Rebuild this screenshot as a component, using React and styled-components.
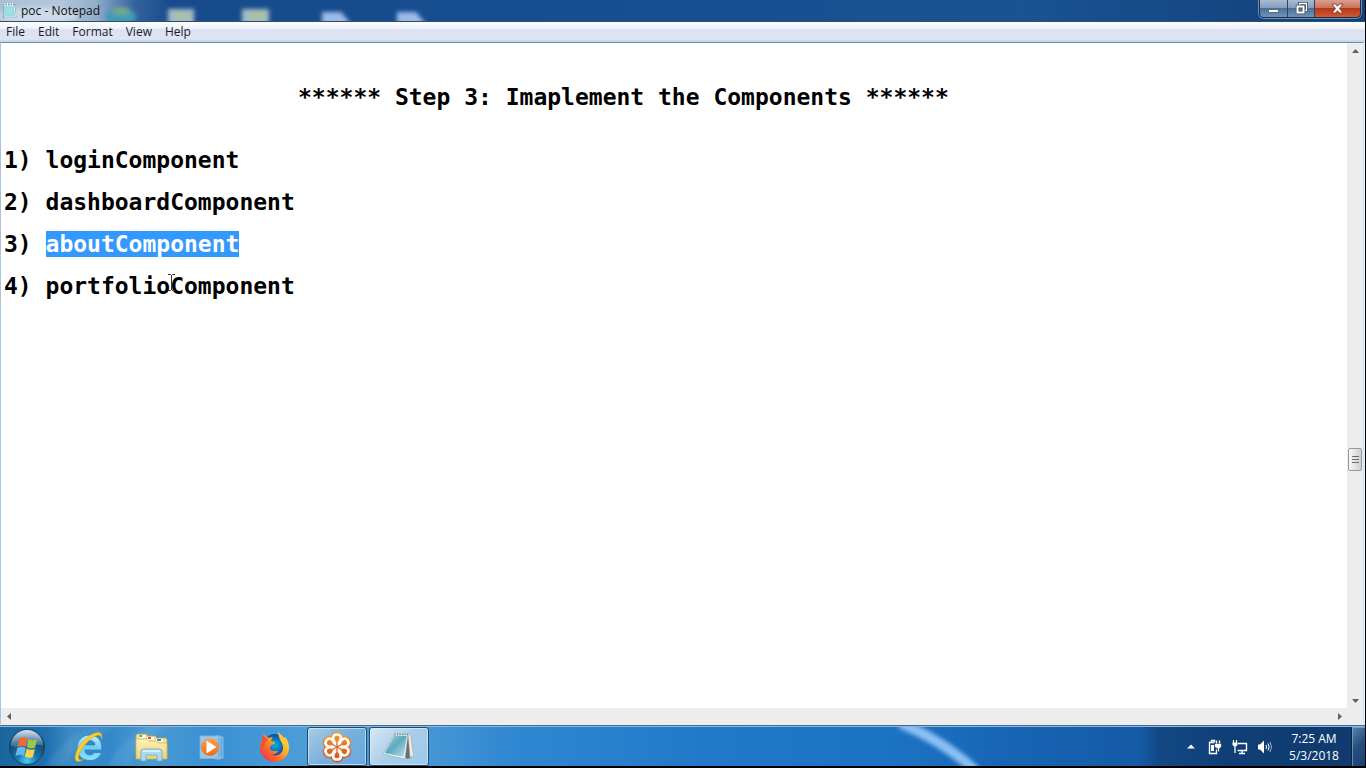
import React, { useLayoutEffect, useRef } from "react";
import styled, { createGlobalStyle } from "styled-components";

const GlobalStyle = createGlobalStyle`
  * { box-sizing: border-box; }
  body { margin: 0; background: #000; overflow: hidden; }
  button { font: inherit; border: 0; padding: 0; background: none; color: inherit; }
`;

const Desktop = styled.div`
  height: 100vh;
  display: flex;
  flex-direction: column;
  padding: 0 1px 2px 0;
  font-family: "Open Sans", "Noto Sans", sans-serif;
  font-size: 12px;
  background: #000;
`;

const Window = styled.main`
  flex: 1;
  min-height: 0;
  display: flex;
  flex-direction: column;
  background: #e8f1fa;
  border-bottom: 1px solid #46698c;
`;

const TitleBar = styled.header`
  position: relative;
  flex: none;
  height: 22px;
  display: flex;
  align-items: flex-start;
  overflow: hidden;
  background: linear-gradient(90deg, #a9bfd6 0, #b4c6da 60px, #92aecb 95px, #33639c 135px, #174b8b 170px, #164d90 460px, #1a5294 75%, #123f77 100%);
  border-bottom: 1px solid #2c4d74;
`;

const GlassBackdrop = styled.svg`
  position: absolute;
  inset: 0;
  width: 100%;
  height: 100%;
`;

const Caption = styled.h1`
  position: relative;
  flex: 1;
  display: flex;
  align-items: center;
  gap: 4px;
  height: 21px;
  margin: 0;
  padding-left: 2px;
  font-size: 12px;
  line-height: 20px;
  font-weight: 400;
  color: #111;
`;

const CaptionButtons = styled.div`
  position: relative;
  display: flex;
  height: 18px;
  margin-right: 4px;
  border: 1px solid #1c2f4a;
  border-top: 0;
  border-radius: 0 0 5px 5px;
  overflow: hidden;
  box-shadow: 0 0 0 1px rgba(200, 220, 240, 0.5);
`;

const CaptionButton = styled.button`
  width: ${(p) => (p.$close ? 46 : 27)}px;
  display: flex;
  align-items: center;
  justify-content: center;
  background: ${(p) =>
    p.$close
      ? "linear-gradient(#d9a08f 0, #cc7459 45%, #b8371a 50%, #cf5a35 100%)"
      : "linear-gradient(#a9bcd2 0, #839fbe 45%, #4b7199 50%, #6f95ba 100%)"};
  & + & { border-left: 1px solid #2b4463; }
`;

const MenuBar = styled.nav`
  flex: none;
  display: flex;
  height: 20px;
  background: linear-gradient(#fdfdff 0, #f1f4fb 30%, #dbe2f3 40%, #dde4f5 85%, #c8cfdd 100%);
`;

const MenuItem = styled.button`
  height: 19px;
  padding: 0 6px;
  line-height: 18px;
  color: #1c1c1c;
  & + & { margin-left: 1px; }
`;

const Client = styled.section`
  flex: 1;
  min-height: 0;
  display: grid;
  grid-template: minmax(0, 1fr) 16px / minmax(0, 1fr) 16px;
  margin: 0 1px 1px 0;
  border: 1px solid #6f9cc8;
  border-width: 1px 1px 0;
  border-color: #5f93c6 #c9e4f5 #c9e4f5 #a9c2de;
`;

const Editor = styled.textarea`
  display: block;
  width: 100%;
  height: 100%;
  margin: 0;
  padding: 2px 3px;
  border: 0;
  outline: 0;
  resize: none;
  overflow: hidden;
  white-space: pre;
  tab-size: 98px;
  background: #fff;
  color: #000;
  font: bold 23px/21px "DejaVu Sans Mono", monospace;
  &::selection { background: #3399ff; color: #fff; }
`;

const ScrollTrack = styled.div`
  display: flex;
  flex-direction: ${(p) => (p.$vertical ? "column" : "row")};
  align-items: center;
  justify-content: space-between;
  background: #ededed;
`;

const ScrollButton = styled.button`
  width: 16px;
  height: 16px;
  display: grid;
  place-items: center;
`;

const Spring = styled.div`
  flex: ${(p) => p.$grow};
`;

const Thumb = styled.div`
  width: 14px;
  height: 23px;
  display: grid;
  place-items: center;
  border: 1px solid #979797;
  border-radius: 2px;
  background: linear-gradient(90deg, #f8f8f8, #e3e3e3 50%, #cfcfcf);
`;

const Corner = styled.div`
  background: #ededed;
`;

const Taskbar = styled.footer`
  position: relative;
  flex: none;
  height: 40px;
  display: flex;
  color: #fff;
  overflow: hidden;
  background: linear-gradient(90deg, #1a659e 0, #1d6fae 45px, #3a8ac4 70px, #3388c8 110px, #4a9bd3 150px, #3a90d2 210px, #4b9dd8 300px, #4596d5 430px, #2f86d0 520px, #2279c9 700px, #1c72c2 900px, #1766b5 1000px, #155aa5 1140px, #124884 1160px, #0f3e76 1230px, #0f3a6e 1366px);
  border-top: 1px solid #8cb8dc;
`;

const Launchers = styled.div`
  position: relative;
  display: flex;
  gap: 2px;
  flex: 1;
`;

const StartButton = styled.button`
  position: relative;
  width: 57px;
  display: grid;
  place-items: center;
  padding-right: 3px;
`;

const TaskButton = styled.button`
  width: 60px;
  display: grid;
  place-items: center;
  border: 1px solid ${(p) => (p.$open ? "#23496d" : "transparent")};
  border-radius: 3px;
  box-shadow: ${(p) => (p.$open ? "inset 0 0 0 1px rgba(220,240,255,.65)" : "none")};
  background: ${(p) =>
    p.$active
      ? "linear-gradient(135deg, #d7e8f5 0, #a9cde9 50%, #9dc8ea 100%)"
      : p.$open
      ? "linear-gradient(135deg, #a9cce6 0, #78b0dc 50%, #67a9df 100%)"
      : "none"};
`;

const Tray = styled.div`
  position: relative;
  display: flex;
  align-items: center;
`;

const TrayButton = styled.button`
  width: ${(p) => p.$width || 24}px;
  height: 24px;
  display: grid;
  place-items: center;
`;

const Clock = styled.time`
  width: 74px;
  text-align: center;
  font-size: 12px;
  line-height: 17px;
`;

const ShowDesktop = styled.button`
  width: 14px;
  height: 39px;
  border-left: 1px solid #0a2344;
  background: linear-gradient(135deg, #5f83a8 0, #254e80 50%, #1c4170 100%);
  box-shadow: inset 1px 1px 0 rgba(160, 195, 225, 0.5);
`;

const Pointer = styled.svg`
  position: fixed;
  left: 167px;
  top: 274px;
  pointer-events: none;
`;

function Backdrop() {
  return (
    <GlassBackdrop aria-hidden="true">
      <defs>
        <filter id="soft" x="-30%" y="-50%" width="160%" height="200%">
          <feGaussianBlur stdDeviation="2" />
        </filter>
      </defs>
      <g filter="url(#soft)">
        <ellipse cx="38" cy="16" rx="40" ry="9" fill="#dae3ec" opacity=".7" />
        <ellipse cx="121" cy="17" rx="15" ry="9" fill="#3c9cb5" />
        <ellipse cx="121" cy="11" rx="9" ry="4" fill="#74a88a" />
        <path d="M168 9h26v16h-26z" fill="#a2bbc4" />
        <path d="M242 9h27v16h-27z" fill="#a3bcc0" />
        <path d="M176 13h12v6h-12zM251 12h13v7h-13z" fill="#aebf9d" />
        <path d="M322 12h19l10 12h-29zM397 12h19l10 12h-29z" fill="#9dbbe6" />
      </g>
    </GlassBackdrop>
  );
}

function NotepadSmall() {
  return (
    <svg width="15" height="17" viewBox="0 0 15 17" aria-hidden="true">
      <path d="M2 2.5h10.5l1.5 13H1z" fill="#7ec4d2" stroke="#678d9d" strokeWidth=".7" />
      <path d="M2 3h9l1.2 11H1.5z" fill="#9edce5" />
      <path d="M3 1v3M5.500 1v3M8 1v3M10.500 1v3" stroke="#f3f8fa" />
      <path d="M12 3.500l1.500 11.500H2" fill="none" stroke="#eef8fa" />
    </svg>
  );
}

function StartOrb() {
  return (
    <svg width="38" height="38" viewBox="0 0 38 38" aria-hidden="true">
      <defs>
        <radialGradient id="orb" cx=".5" cy=".9" r=".85">
          <stop offset="0" stopColor="#45d3f2" />
          <stop offset=".35" stopColor="#1674ab" />
          <stop offset=".75" stopColor="#164773" />
          <stop offset="1" stopColor="#527c9d" />
        </radialGradient>
        <linearGradient id="orbShine" x2="0" y2="1">
          <stop offset="0" stopColor="#e8f4fa" stopOpacity=".85" />
          <stop offset="1" stopColor="#a0c8dc" stopOpacity=".25" />
        </linearGradient>
      </defs>
      <circle cx="19" cy="19" r="17.5" fill="url(#orb)" stroke="#174264" />
      <path d="M3 18a16 16 0 0 1 32 0c-9-4-20 3-32 0z" fill="url(#orbShine)" />
      <path d="M11.500 10.500q4.500-2.500 8 0l-1.500 8.500q-4-2.300-8.500 0z" fill="#ee6a32" />
      <path d="M20.500 11q4 2.500 8.500.3l-2 8.500q-4.300 1.800-8-.5z" fill="#9ac84c" />
      <path d="M9.200 20q4.500-2.300 8.500 0l-1.700 8q-4-2.500-8.500 0z" fill="#64b8ee" />
      <path d="M18.700 20.500q4 2.300 8.200.4l-2.100 8q-4 2-7.900-.5z" fill="#ffd04b" />
    </svg>
  );
}

function ExplorerE() {
  return (
    <svg width="34" height="34" viewBox="0 0 34 34" aria-hidden="true">
      <defs>
        <linearGradient id="ie" x2="0" y2="1">
          <stop offset="0" stopColor="#c5f1ff" />
          <stop offset=".5" stopColor="#70cdf5" />
          <stop offset="1" stopColor="#8be0fc" />
        </linearGradient>
      </defs>
      <path fillRule="evenodd" d="M18 5C10.500 5 5 10.500 5 18c0 7.500 5.500 12.500 13 12.500 5.500 0 9.700-2.800 11.500-8h-7.300c-.8 1.600-2.200 2.500-4.300 2.500-3 0-5-2-5.100-5h17.100C30.500 11 25.500 5 18 5zm-5.100 10c.4-2.700 2.300-4.400 5.100-4.400s4.700 1.700 5 4.400z" fill="url(#ie)" stroke="#2b84bd" strokeWidth=".8" />
      <path d="M29.500 9.500C31 5 29.300 2 25.500 2.400 19 3 9 11 5 20c-3 7-2.400 11.500 1.200 11.500 1.800 0 3.800-1 5.800-2.500-5 2.300-7-.2-4.300-6C11.300 15 20 6.300 26 5.200c2.500-.4 3.600 1.300 3.500 4.300z" fill="#f6cf33" stroke="#d09a1b" strokeWidth=".5" />
    </svg>
  );
}

function Folder() {
  return (
    <svg width="34" height="34" viewBox="0 0 34 34" aria-hidden="true">
      <defs>
        <linearGradient id="folder" x2="0" y2="1">
          <stop offset="0" stopColor="#fff3b8" />
          <stop offset="1" stopColor="#ecd071" />
        </linearGradient>
      </defs>
      <path d="M2 6q0-2 2-2h8l2 2h7l2 2h8q2 0 2 2v18H2z" fill="#f3df91" stroke="#c4a552" strokeWidth=".7" />
      <path d="M5 5h6v3H5zM13 7h7v3h-7zM22 9h7v3h-7z" fill="#fff" />
      <path d="M5.500 5h2.500v2H5.500z" fill="#3fa457" />
      <path d="M14 7h3v2h-3z" fill="#dc4836" />
      <path d="M23 9h4v2h-4z" fill="#4388ca" />
      <path d="M2 9h11l2 2h7l2 2h9v16H2z" fill="url(#folder)" stroke="#cfb057" strokeWidth=".7" />
      <path d="M7 31V22q0-3 3-3h15q3 0 3 3v9h-5v-6H12v6z" fill="#a8daf2" stroke="#6caacd" strokeWidth=".8" />
      <path d="M8.500 21h18" stroke="#e2f6ff" strokeWidth="1.500" />
    </svg>
  );
}

function MediaPlayer() {
  return (
    <svg width="34" height="34" viewBox="0 0 34 34" aria-hidden="true">
      <defs>
        <linearGradient id="play" x2="0" y2="1">
          <stop offset="0" stopColor="#f9a052" />
          <stop offset="1" stopColor="#ed6b18" />
        </linearGradient>
      </defs>
      <path d="M22 7h5v21h-5zM19 6h5v23h-5z" fill="#62a9dc" stroke="#a3d0ee" strokeWidth=".7" />
      <path d="M4 6h18v22.500H4z" fill="#98c7e9" stroke="#80b8df" strokeWidth=".8" />
      <circle cx="14" cy="17" r="9" fill="url(#play)" />
      <path d="M10.500 10.500v13l10-6.500z" fill="#fff" />
    </svg>
  );
}

function Firefox() {
  return (
    <svg width="34" height="34" viewBox="0 0 34 34" aria-hidden="true">
      <defs>
        <linearGradient id="fox" x1="1" x2="0" y2="1">
          <stop offset="0" stopColor="#fff04d" />
          <stop offset=".4" stopColor="#ffae25" />
          <stop offset=".7" stopColor="#f85b32" />
          <stop offset="1" stopColor="#e52469" />
        </linearGradient>
        <radialGradient id="globe">
          <stop offset="0" stopColor="#00b3e6" />
          <stop offset="1" stopColor="#1745a1" />
        </radialGradient>
      </defs>
      <circle cx="17" cy="15" r="11" fill="url(#globe)" />
      <path d="M20 1c1 3 4 4 6 7l1-1c3 3 4 7 4 11a14.500 14 0 0 1-29 0c0-4 1-7 3-9V4l5 4c2-1 4-1 5 0-1 0-2 2-2 3l4 1c0 2-1 2-4 3 0 2-2 2-1 4 2 3 5 1.500 8 2-1 3-5 4-7 3 4 3 11 1 12-5 1-6-5-9-5-18z" fill="url(#fox)" />
      <path d="M5 5l5 5-3 2-1 6-3-3z" fill="#fa4a33" />
    </svg>
  );
}

function Meeting() {
  const petals = [0, 60, 120, 180, 240, 300];
  return (
    <svg width="34" height="34" viewBox="0 0 34 34" aria-hidden="true">
      <defs>
        <linearGradient id="flower" gradientUnits="userSpaceOnUse" x1="17" y1="1" x2="17" y2="33">
          <stop offset="0" stopColor="#eda02e" />
          <stop offset="1" stopColor="#cc4c25" />
        </linearGradient>
      </defs>
      <g fill="url(#flower)">
        <circle cx="17" cy="17" r="13" />
        {petals.map((a) => {
          const t = (a * Math.PI) / 180;
          return <circle key={a} cx={17 + 9 * Math.sin(t)} cy={17 - 9 * Math.cos(t)} r="6.500" />;
        })}
      </g>
      <g fill="none" stroke="#fffaf3" strokeWidth="2.600">
        {petals.map((a) => (
          <path key={a} d="M15.800 13.500C11.500 9 12.500 4.500 17 4.500s5.500 4.500 1.200 9" transform={`rotate(${a} 17 17)`} />
        ))}
      </g>
      <circle cx="17" cy="17" r="4" fill="#fffaf3" />
      <g stroke="#dd6a2a" strokeWidth="1.300">
        <path d="M17 12.500v9M13 14.800l8 4.400M13 19.200l8-4.400" />
      </g>
    </svg>
  );
}

function NotepadLarge() {
  return (
    <svg width="34" height="34" viewBox="0 0 34 34" aria-hidden="true">
      <defs>
        <linearGradient id="pad" x2="1" y2="1">
          <stop offset="0" stopColor="#b5dfe9" />
          <stop offset=".45" stopColor="#5fa9bf" />
          <stop offset="1" stopColor="#b9e2e8" />
        </linearGradient>
      </defs>
      <path d="M26 4.500l3.500 23-4 1.500-3-2z" fill="#6f6d68" />
      <path d="M26 4h2.500l3 22-3.500 1.500z" fill="#eceae4" stroke="#8d9899" strokeWidth=".4" />
      <path d="M12.500 4L26 4.500 23 29 1 24z" fill="#f2f6f6" stroke="#7b9ca5" strokeWidth=".5" />
      <path d="M12.500 5.500l12.300.5L21.500 27 2.500 23z" fill="url(#pad)" />
      <path d="M13 3.500v2M15.500 3.500v2M18 3.500v2M20.500 3.500v2M23 3.500v2M25.500 3.500v2" stroke="#71848b" strokeWidth=".9" />
    </svg>
  );
}

function Arrow({ points }) {
  return (
    <svg width="7" height="7" viewBox="0 0 7 7" aria-hidden="true">
      <path d={points} fill="#606060" />
    </svg>
  );
}

const launchers = [
  { name: "Internet Explorer", icon: ExplorerE },
  { name: "Windows Explorer", icon: Folder },
  { name: "Windows Media Player", icon: MediaPlayer },
  { name: "Firefox", icon: Firefox },
  { name: "GoToMeeting", icon: Meeting, open: true },
  { name: "Notepad", icon: NotepadLarge, open: true, active: true },
];

const selected = "aboutComponent";
const content = [
  "",
  "",
  "\t\t\t****** Step 3: Imaplement the Components ******",
  "",
  "",
  "1) loginComponent",
  "",
  "2) dashboardComponent",
  "",
  "3) aboutComponent",
  "",
  "4) portfolioComponent",
].join("\n");

export default function App() {
  const editor = useRef(null);

  useLayoutEffect(() => {
    const start = content.indexOf(selected);
    editor.current.focus({ preventScroll: true });
    editor.current.setSelectionRange(start, start + selected.length);
  }, []);

  return (
    <Desktop>
      <GlobalStyle />
      <Window>
        <TitleBar>
          <Backdrop />
          <Caption>
            <NotepadSmall />
            poc - Notepad
          </Caption>
          <CaptionButtons>
            <CaptionButton aria-label="Minimize">
              <svg width="13" height="13" viewBox="0 0 13 13"><path d="M1.500 7.500h10v3h-10z" fill="#fff" stroke="#44556b" strokeWidth=".8" /></svg>
            </CaptionButton>
            <CaptionButton aria-label="Restore">
              <svg width="13" height="13" viewBox="0 0 13 13" fill="none">
                <path d="M4.500 3V1.500h7v7H10" stroke="#3c4c62" strokeWidth="3" />
                <path d="M4.500 3V1.500h7v7H10" stroke="#fff" strokeWidth="1.300" />
                <path d="M2.500 4.500h6v6h-6z" stroke="#3c4c62" strokeWidth="3.500" />
                <path d="M2.500 4.500h6v6h-6z" stroke="#fff" strokeWidth="2" />
              </svg>
            </CaptionButton>
            <CaptionButton $close aria-label="Close">
              <svg width="13" height="13" viewBox="0 0 13 13">
                <path d="M1 2h3.500l2 2.300L8.500 2H12L8.500 6.500 12 11H8.500l-2-2.300-2 2.300H1l3.500-4.500z" fill="#fff" stroke="#62372f" strokeWidth=".8" />
              </svg>
            </CaptionButton>
          </CaptionButtons>
        </TitleBar>
        <MenuBar aria-label="Menu">
          {["File", "Edit", "Format", "View", "Help"].map((item) => (
            <MenuItem key={item}>{item}</MenuItem>
          ))}
        </MenuBar>
        <Client>
          <Editor ref={editor} aria-label="Document text" spellCheck={false} wrap="off" defaultValue={content} />
          <ScrollTrack $vertical>
            <ScrollButton aria-label="Scroll up"><Arrow points="M0 5L3.500 1 7 5z" /></ScrollButton>
            <Spring $grow={390} />
            <Thumb>
              <svg width="7" height="9" viewBox="0 0 7 9" aria-hidden="true"><path d="M0 1.500h7M0 4.500h7M0 7.500h7" stroke="#6c6c6c" /></svg>
            </Thumb>
            <Spring $grow={221} />
            <ScrollButton aria-label="Scroll down"><Arrow points="M0 2l3.500 4L7 2z" /></ScrollButton>
          </ScrollTrack>
          <ScrollTrack>
            <ScrollButton aria-label="Scroll left"><Arrow points="M5 0L1 3.500 5 7z" /></ScrollButton>
            <ScrollButton aria-label="Scroll right"><Arrow points="M2 0l4 3.500L2 7z" /></ScrollButton>
          </ScrollTrack>
          <Corner />
        </Client>
      </Window>
      <Taskbar>
        <GlassBackdrop aria-hidden="true">
          <path d="M46 40Q61 12 88 0h30Q78 12 64 40zM108 40q9-26 40-40h19q-34 16-37 40z" fill="#9ed0ef" opacity=".14" filter="url(#soft)" />
          <path d="M900-4q42 17 76 48" fill="none" stroke="#8ac0f4" strokeWidth="10" filter="url(#soft)" />
        </GlassBackdrop>
        <Launchers>
          <StartButton aria-label="Start"><StartOrb /></StartButton>
          {launchers.map(({ name, icon: Icon, open, active }) => (
            <TaskButton key={name} aria-label={name} $open={open} $active={active}>
              <Icon />
            </TaskButton>
          ))}
        </Launchers>
        <Tray>
          <TrayButton aria-label="Show hidden icons">
            <svg width="8" height="5" viewBox="0 0 8 5"><path d="M0 4.500L4 .5l4 4z" fill="#fff" /></svg>
          </TrayButton>
          <TrayButton aria-label="Power">
            <svg width="16" height="16" viewBox="0 0 16 16" fill="none" stroke="#fff">
              <path d="M7.500 3.500h-5v11h7v-4M4.500 3V1.500h3V3" strokeWidth="1.400" />
              <path d="M4 6h3v6H4z" fill="#fff" stroke="none" />
              <path d="M7.500 4.500h7v2.500q0 2-2 2.500v2q0 1.500-2 1.500V9.500q-3-.5-3-2.500z" fill="#fff" stroke="#17365f" strokeWidth=".7" />
              <path d="M9.500 1.500v3M12.500 1.500v3" strokeWidth="1.400" />
            </svg>
          </TrayButton>
          <TrayButton aria-label="Network" $width={26}>
            <svg width="16" height="16" viewBox="0 0 16 16" fill="none" stroke="#fff">
              <path d="M6 4.500h8.500v7H5.500M7 14.500h6M10 12v2" strokeWidth="1.400" />
              <path d="M1.500 1v3M4.500 1v3" strokeWidth="1.200" />
              <path d="M.5 3.500h5V6L4 7.500H2L.5 6z" fill="#fff" stroke="none" />
              <path d="M3 7v7" strokeWidth="1.300" />
            </svg>
          </TrayButton>
          <TrayButton aria-label="Volume">
            <svg width="16" height="16" viewBox="0 0 16 16" fill="none" stroke="#fff">
              <path d="M1 5.500h2l4-4v13l-4-4H1z" fill="#fff" stroke="none" />
              <path d="M9 6q1.200 2 0 4M11 4.500q2.200 3.500 0 7" />
              <path d="M13 3q3 5 0 10" opacity=".6" />
            </svg>
          </TrayButton>
          <Clock dateTime="2018-05-03T07:25">
            7:25 AM
            <br />
            5/3/2018
          </Clock>
          <ShowDesktop aria-label="Show desktop" />
        </Tray>
      </Taskbar>
      <Pointer width="9" height="17" viewBox="0 0 9 17" aria-hidden="true">
        <path d="M1 .5h2.500l1 1 1-1H8M4.500 1v15M1 16.500h2.500l1-1 1 1H8" fill="none" stroke="#333" />
      </Pointer>
    </Desktop>
  );
}
